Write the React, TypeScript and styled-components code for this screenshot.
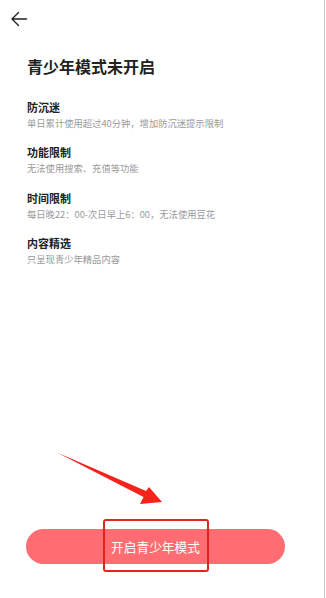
import React from "react";
import styled, { createGlobalStyle } from "styled-components";

const Global = createGlobalStyle`
  html, body { margin: 0; padding: 0; background: #fff; }
  body { font-family: "Noto Sans CJK SC", "Noto Sans", sans-serif; }
`;

const Page = styled.div`
  position: relative;
  width: 324px;
  height: 598px;
  border-right: 1px solid #c8c8c8;
  background: #fff;
  display: flex;
  flex-direction: column;
  overflow: hidden;
`;

const Header = styled.div`
  height: 37px;
  display: flex;
  align-items: center;
  padding-left: 10px;
`;

const Title = styled.h1`
  margin: 18px 0 0 27px;
  font-size: 16px;
  line-height: 22px;
  font-weight: 700;
  color: #222;
  letter-spacing: 0;
`;

const List = styled.div`
  margin: 23px 0 0 27px;
  display: flex;
  flex-direction: column;
  gap: 15.3px;
`;

const Item = styled.div`
  display: flex;
  flex-direction: column;
  gap: 2px;
`;

const ItemHead = styled.div`
  font-size: 11px;
  line-height: 15px;
  font-weight: 700;
  color: #222;
`;

const ItemSub = styled.div`
  font-size: 9.3px;
  line-height: 13px;
  color: #9a9a9a;
`;

const Footer = styled.div`
  margin-top: auto;
  padding: 0 39px 34px 26px;
  position: relative;
`;

const Button = styled.button`
  width: 259px;
  height: 35px;
  border: none;
  border-radius: 18px;
  background: #ff6d73;
  color: #fff;
  font-family: inherit;
  font-size: 12.7px;
  padding: 0;
  display: flex;
  align-items: center;
  justify-content: center;
`;

const Highlight = styled.div`
  position: absolute;
  left: 103px;
  top: -10px;
  width: 102px;
  height: 49px;
  border: 2px solid #e5251d;
  border-radius: 3px;
  pointer-events: none;
`;

const Arrow = styled.svg`
  position: absolute;
  left: 0;
  top: 0;
  pointer-events: none;
`;

const items = [
  { h: "防沉迷", s: "单日累计使用超过40分钟，增加防沉迷提示限制" },
  { h: "功能限制", s: "无法使用搜索、充值等功能" },
  { h: "时间限制", s: "每日晚22：00-次日早上6：00，无法使用豆花" },
  { h: "内容精选", s: "只呈现青少年精品内容" },
];

export default function App() {
  return (
    <>
      <Global />
      <Page>
        <Header>
          <svg width="18" height="16" viewBox="0 0 18 16">
            <path d="M16.5 8H2M8.5 1.5L2 8l6.5 6.5" fill="none" stroke="#222" strokeWidth="1.4" strokeLinecap="round" strokeLinejoin="round" />
          </svg>
        </Header>
        <Title>青少年模式未开启</Title>
        <List>
          {items.map((it) => (
            <Item key={it.h}>
              <ItemHead>{it.h}</ItemHead>
              <ItemSub>{it.s}</ItemSub>
            </Item>
          ))}
        </List>
        <Footer>
          <Button>开启青少年模式</Button>
          <Highlight />
        </Footer>
        <Arrow width="326" height="598" viewBox="0 0 326 598">
          <path d="M57 452.5 L146 491 L149 487 L162 502 L140 504 L143.5 497 Z" fill="#f4231b" />
        </Arrow>
      </Page>
    </>
  );
}
